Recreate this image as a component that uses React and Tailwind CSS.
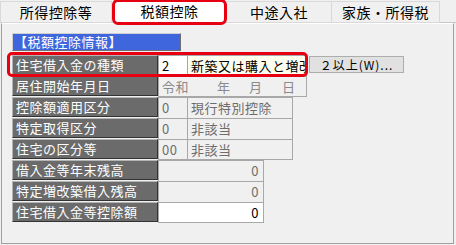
import React from "react";

const font = { fontFamily: '"Noto Sans CJK JP", "Noto Sans", sans-serif' };

const Label = ({ children }) => (
  <div className="h-[20px] w-[146px] shrink-0 bg-[#6b6b6b] border border-t-[#b4b4b4] border-l-[#b4b4b4] border-b-[#333333] border-r-[#333333] text-white pl-[3px] leading-[17px] text-[13px] tracking-[0.5px] whitespace-nowrap overflow-hidden">
    {children}
  </div>
);

const Cell = ({ className = "", last, children }) => (
  <div
    className={`h-full border-t border-x border-[#a8a8a8] ${
      last ? "border-b" : ""
    } px-[3px] leading-[19px] text-[13px] tracking-[0.5px] whitespace-nowrap overflow-hidden ${className}`}
  >
    {children}
  </div>
);

const tabs = ["所得控除等", "税額控除", "中途入社", "家族・所得税"];

export default function App() {
  return (
    <div className="w-[456px] h-[245px] bg-[#f0f0f0] relative overflow-hidden" style={font}>
      {/* tabs */}
      <div className="flex h-[23px] border-b border-[#c8c8c8]">
        <div className="w-[112px] h-[22px] mt-[1px] border border-[#d9d9d9] text-[14px] leading-[20px] text-center tracking-[0.5px] text-black">
          {tabs[0]}
        </div>
        <div className="w-[115px] h-[26px] -mt-[1px] z-10 bg-white border-[3px] border-[#e60012] rounded-[6px] text-[14px] leading-[18px] text-center tracking-[0.5px] text-black">
          {tabs[1]}
        </div>
        <div className="w-[105px] h-[22px] mt-[1px] border border-l-0 border-[#d9d9d9] text-[14px] leading-[20px] text-center tracking-[0.5px] text-black">
          {tabs[2]}
        </div>
        <div className="w-[108px] h-[22px] mt-[1px] border border-l-0 border-[#d9d9d9] text-[14px] leading-[20px] text-center tracking-[0.5px] text-black">
          {tabs[3]}
        </div>
      </div>

      {/* panel */}
      <div className="ml-[1px] w-[453px] h-[221px] border-x border-b border-[#a0a0a0] border-t border-t-white pl-[10px] pt-[9px]">
        <div className="w-[169px] h-[18px] bg-[#3f66dc] border border-t-[#d0d0d0] border-l-[#d0d0d0] border-b-[#707070] border-r-[#707070] text-white text-[13px] leading-[15px] pl-[1px] tracking-[0.5px]">
          【税額控除情報】
        </div>

        <div className="mt-[4px] flex flex-col">
          <div className="flex h-[21px] items-start">
            <Label>住宅借入金の種類</Label>
            <Cell last className="w-[30px] bg-white text-black">2</Cell>
            <Cell last className="w-[119px] bg-[#fffff0] text-black border-l-0">新築又は購入と増改</Cell>
            <div className="ml-[2px] mt-[1px] w-[95px] h-[17px] bg-[#e1e1e1] border border-[#adadad] text-[12px] leading-[15px] text-center tracking-[1px] text-black">
              ２以上(W)...
            </div>
          </div>
          <div className="flex h-[21px]">
            <Label>居住開始年月日</Label>
            <Cell last className="w-[149px] text-[#8a8a8a] flex">
              <span className="w-[55px]">令和</span>
              <span className="w-[32px]">年</span>
              <span className="w-[33px]">月</span>
              <span>日</span>
            </Cell>
          </div>
          <div className="flex h-[21px]">
            <Label>控除額適用区分</Label>
            <Cell className="w-[30px] text-[#6d6d6d]">0</Cell>
            <Cell className="w-[105px] text-[#6d6d6d] border-l-0">現行特別控除</Cell>
          </div>
          <div className="flex h-[21px]">
            <Label>特定取得区分</Label>
            <Cell className="w-[30px] text-[#6d6d6d]">0</Cell>
            <Cell className="w-[105px] text-[#6d6d6d] border-l-0">非該当</Cell>
          </div>
          <div className="flex h-[21px]">
            <Label>住宅の区分等</Label>
            <Cell last className="w-[30px] text-[#6d6d6d]">00</Cell>
            <Cell last className="w-[105px] text-[#6d6d6d] border-l-0">非該当</Cell>
          </div>
          <div className="flex h-[21px]">
            <Label>借入金等年末残高</Label>
            <Cell className="w-[106px] text-right text-[#6d6d6d] pr-[4px]">0</Cell>
          </div>
          <div className="flex h-[21px]">
            <Label>特定増改築借入残高</Label>
            <Cell className="w-[106px] text-right text-[#6d6d6d] pr-[4px]">0</Cell>
          </div>
          <div className="flex h-[21px]">
            <Label>住宅借入金等控除額</Label>
            <Cell last className="w-[106px] text-right bg-white text-black pr-[4px]">0</Cell>
          </div>
        </div>
      </div>

      {/* highlight */}
      <div className="absolute left-[7px] top-[52px] w-[301px] h-[25px] border-[3px] border-[#e60012] rounded-[5px] pointer-events-none" />
    </div>
  );
}
